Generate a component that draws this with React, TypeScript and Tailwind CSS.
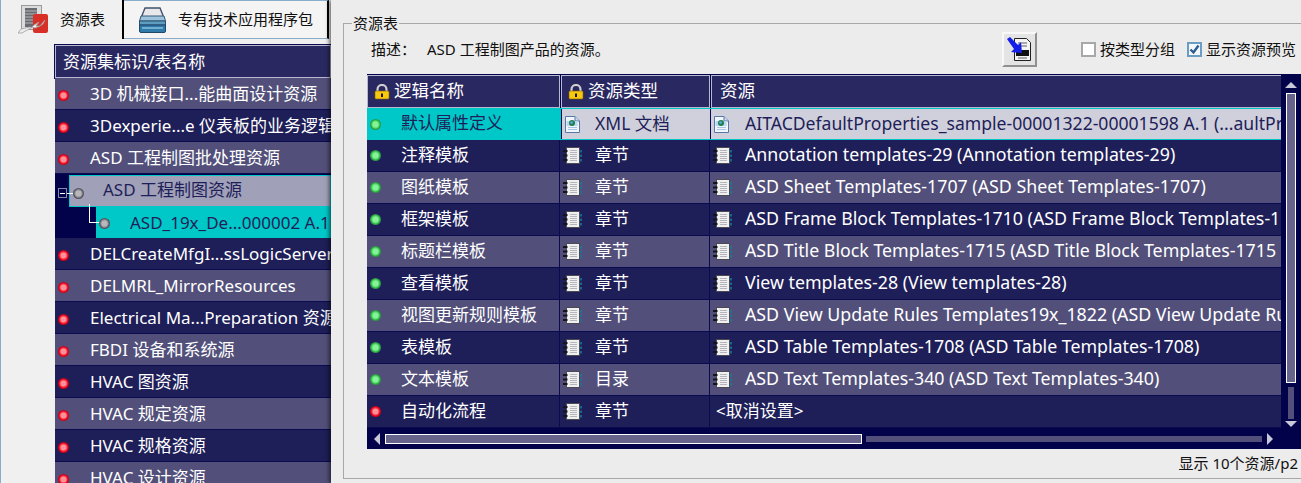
import type { ReactNode } from "react";

const FONT = "font-['Noto_Sans','Noto_Sans_CJK_SC',sans-serif]";

type Led = "red" | "green" | "gray";

const LED_COLORS: Record<Led, { rim: string; mid: string; core: string }> = {
  red: { rim: "#d00018", mid: "#ff3040", core: "#ff9098" },
  green: { rim: "#2f9a45", mid: "#48e060", core: "#88f098" },
  gray: { rim: "#555560", mid: "#909098", core: "#b8b8bc" },
};

function LedDot({ color }: { color: Led }) {
  const c = LED_COLORS[color];
  return (
    <svg width="11" height="11" viewBox="0 0 11 11" className="shrink-0">
      <circle cx="5.5" cy="5.5" r="5.5" fill={c.rim} />
      <circle cx="5.5" cy="5.5" r="4.2" fill={c.mid} />
      <circle cx="5.5" cy="5.5" r="3" fill={c.core} />
    </svg>
  );
}

function NotebookIcon() {
  return (
    <svg width="19" height="17" viewBox="0 0 19 17" className="shrink-0">
      <rect x="3.5" y=".5" width="13" height="16" fill="#f0f0f0" stroke="#4a4a54" />
      <path d="M7 3.5h7M7 5.5h7M7 7.5h7M7 9.5h7M7 11.5h7M7 13.5h7" stroke="#b4b4ba" />
      <path d="M0 4h4.5M0 8.5h4.5M0 13h4.5" stroke="#14141c" strokeWidth="2" />
      <path d="M18 3v2.5M18 7.5v2.5M18 12v2.5" stroke="#0f7f9a" strokeWidth="1.5" />
    </svg>
  );
}

function XmlIcon() {
  return (
    <svg width="15" height="17" viewBox="0 0 15 17" className="shrink-0">
      <path d="M.5.5H10L14.5 5v11.5H.5z" fill="#f0f6fc" stroke="#5878a8" />
      <path d="M10 .5V5h4.5" fill="#c8d8ec" stroke="#5878a8" />
      <path d="M1.5 5h11v5h-11z" fill="#bcd6f0" />
      <circle cx="7" cy="7" r="3" fill="#1f7f48" />
      <circle cx="6.6" cy="6.6" r="1.4" fill="#58a8ec" />
      <path d="M3 11.5h9M3 13.5h9" stroke="#a8c4e4" />
    </svg>
  );
}

function LockIcon() {
  return (
    <svg width="16" height="16" viewBox="0 0 16 16" className="shrink-0">
      <path d="M3.5 8V5.5a4.5 4.5 0 0 1 9 0V8" fill="none" stroke="#d0d0d0" strokeWidth="2.2" />
      <rect x="1" y="7" width="14" height="8" rx="1" fill="#f8c810" stroke="#806000" strokeWidth=".6" />
      <path d="M7 9.5h2V13H7z" fill="#201808" />
    </svg>
  );
}

function ResourceTabIcon() {
  return (
    <svg width="30" height="30" viewBox="0 0 30 30" className="shrink-0">
      <rect x="3.5" y=".5" width="20" height="24" fill="#dcdcdc" stroke="#9a9a9a" />
      <rect x="7" y="3" width="12" height="19" fill="#6a6a72" />
      <path d="M7 6h12M7 9h12M7 12h12M7 15h12M7 18h12" stroke="#b4b4ba" />
      <rect x="15" y="9" width="15" height="19" rx="2" fill="#d83028" />
      <path d="M0 28l3-4 9-2 5 1 5-2 5-6-2 4-3 2-4 0 3-4-5 3-3 3-9 5z" fill="#ececec" stroke="#a0a0a0" strokeWidth=".8" />
    </svg>
  );
}

function PackageTabIcon() {
  return (
    <svg width="27" height="26" viewBox="0 0 27 26" className="shrink-0">
      <path d="M6 1h15l4 10H2z" fill="#e8e8ec" stroke="#40506a" strokeWidth="1.4" />
      <path d="M2 9h23l1.5 5H.5z" fill="#9cc4dc" stroke="#3a5a78" />
      <path d="M.5 14h26v4H.5z" fill="#5e9cc0" stroke="#2a5070" />
      <path d="M.5 18h26v6a1.5 1.5 0 0 1-1.5 1.5H2A1.5 1.5 0 0 1 .5 24z" fill="#2f7aa8" stroke="#20486a" />
      <path d="M3 21h21" stroke="#8cc4e0" strokeWidth="1.4" />
    </svg>
  );
}

function ExportIcon() {
  return (
    <svg width="25" height="24" viewBox="0 0 25 24">
      <path d="M7.5 1.5h12l4 4v18h-16z" fill="#f4f4f4" stroke="#202020" />
      <path d="M11 6h9M11 9h9M11 21h9" stroke="#606060" />
      <rect x="9" y="13" width="13" height="6" fill="#101010" />
      <path d="M0 2l3-2 8 8 3-3 1 11-11-1 3-3z" fill="#1420e8" />
    </svg>
  );
}

function Checkbox({ checked }: { checked?: boolean }) {
  return (
    <span
      className={`flex h-[15px] w-[15px] shrink-0 items-center justify-center border-2 ${
        checked ? "border-[#6a9cc4] bg-[#f4f8fc]" : "border-[#a8a8a8] bg-white"
      }`}
    >
      {checked && (
        <svg width="11" height="11" viewBox="0 0 11 11">
          <path d="M1.5 5.5l3 3 5-7" fill="none" stroke="#2c5c90" strokeWidth="2.4" />
        </svg>
      )}
    </span>
  );
}

const TREE_ROWS_TOP = ["3D 机械接口...能曲面设计资源", "3Dexperie...e 仪表板的业务逻辑", "ASD 工程制图批处理资源"];
const TREE_ROWS_BOTTOM = [
  "DELCreateMfgI...ssLogicServer",
  "DELMRL_MirrorResources",
  "Electrical Ma...Preparation 资源",
  "FBDI 设备和系统源",
  "HVAC 图资源",
  "HVAC 规定资源",
  "HVAC 规格资源",
  "HVAC 设计资源",
];

function TreeRow({ label, light }: { label: string; light: boolean }) {
  return (
    <div
      className={`flex h-[32px] shrink-0 items-center overflow-hidden border-b border-[#0a0a50] pl-[3px] ${
        light ? "bg-[#52507a]" : "bg-[#1e1e58]"
      }`}
    >
      <span className="mt-[4px] flex">
        <LedDot color="red" />
      </span>
      <span className="ml-[21px] text-[17px] whitespace-nowrap text-white">{label}</span>
    </div>
  );
}

type Row = { name: string; led: Led; type: string; resource: ReactNode; unset?: boolean };

const ROWS: Row[] = [
  { name: "注释模板", led: "green", type: "章节", resource: "Annotation templates-29 (Annotation templates-29)" },
  { name: "图纸模板", led: "green", type: "章节", resource: "ASD Sheet Templates-1707 (ASD Sheet Templates-1707)" },
  { name: "框架模板", led: "green", type: "章节", resource: "ASD Frame Block Templates-1710 (ASD Frame Block Templates-1" },
  { name: "标题栏模板", led: "green", type: "章节", resource: "ASD Title Block Templates-1715 (ASD Title Block Templates-1715" },
  { name: "查看模板", led: "green", type: "章节", resource: "View templates-28 (View templates-28)" },
  { name: "视图更新规则模板", led: "green", type: "章节", resource: "ASD View Update Rules Templates19x_1822 (ASD View Update Ru" },
  { name: "表模板", led: "green", type: "章节", resource: "ASD Table Templates-1708 (ASD Table Templates-1708)" },
  { name: "文本模板", led: "green", type: "目录", resource: "ASD Text Templates-340 (ASD Text Templates-340)" },
  { name: "自动化流程", led: "red", type: "章节", resource: "<取消设置>", unset: true },
];

function HeaderCell({ width, label }: { width: string; label: string }) {
  return (
    <div className={`flex h-[33px] shrink-0 items-center border border-[#b8b8d0] bg-[#2a2860] pl-[6px] text-[17.5px] text-white ${width}`}>
      <LockIcon />
      <span className="mb-[2px] ml-[4px]">{label}</span>
    </div>
  );
}

export default function App() {
  return (
    <div className={`flex h-[483px] w-full overflow-hidden bg-[#f0f0f0] ${FONT}`}>
      <div className="flex w-[331px] shrink-0 flex-col">
        <div className="flex h-[39px] shrink-0 text-[#101010]">
          <div className="flex w-[124px] items-center border-r-2 border-l border-black border-l-[#8aaccc] bg-[#f0f0f0] pl-[17px]">
            <ResourceTabIcon />
            <span className="ml-[12px] text-[15px]">资源表</span>
          </div>
          <div className="flex w-[205px] items-center border-y border-r-2 border-[#8aaccc] border-r-black bg-[#f4f4f4] pl-[15px]">
            <PackageTabIcon />
            <span className="ml-[12px] text-[15px]">专有技术应用程序包</span>
          </div>
        </div>
        <div className="flex min-h-0 flex-1 flex-col overflow-hidden border-l border-[#8aaccc] pt-[6px] pl-[54px]">
          <div className="flex h-[33px] shrink-0 items-center border border-[#b8b8d0] bg-[#2a2860] pl-[7px] text-[17px] text-white outline outline-1 outline-[#0a0a50]">
            资源集标识/表名称
          </div>
          {TREE_ROWS_TOP.map((label, i) => (
            <TreeRow key={label} label={label} light={i % 2 === 0} />
          ))}
          <div className="flex h-[64px] shrink-0 flex-col bg-[#02024a]">
            <div className="mt-[1px] flex h-[32px] items-center">
              <span className="flex h-[10px] w-[9px] shrink-0 translate-x-[3px] translate-y-[2px] items-center justify-center border border-[#8888a8]">
                <span className="h-px w-[5px] bg-white" />
              </span>
              <span className="relative z-10 ml-[3px] h-px w-[6px] shrink-0 translate-y-[2px] bg-white" />
              <span className="relative z-10 flex translate-y-[2px]">
                <LedDot color="gray" />
              </span>
              <div className="-ml-[15px] flex h-full flex-1 items-center border border-[#00c8c8] bg-[#a0a0b8] pl-[33px] text-[17px] whitespace-nowrap text-[#1e1e58]">
                <span className="mb-[2px]">ASD 工程制图资源</span>
              </div>
            </div>
            <div className="flex h-[31px] items-center overflow-visible">
              <span className="relative z-10 mb-[18px] ml-[34px] h-[19px] w-[11px] shrink-0 border-b border-l border-white" />
              <span className="relative z-10 -ml-px flex translate-y-[1px]">
                <LedDot color="gray" />
              </span>
              <div className="-ml-[14px] flex h-full min-w-0 flex-1 items-center overflow-hidden bg-[#00c8c8] pl-[34px] text-[17px] whitespace-nowrap text-[#1e1e58]">
                ASD_19x_De...000002 A.1
              </div>
            </div>
          </div>
          {TREE_ROWS_BOTTOM.map((label, i) => (
            <TreeRow key={label} label={label} light={i % 2 === 1} />
          ))}
        </div>
      </div>

      <div className="relative z-10 flex min-w-0 flex-1 flex-col bg-[#ececec] pt-[23px] pb-[4px] pl-[12px] shadow-[-2px_0_4px_rgba(0,0,0,0.55)]">
        <div className="relative flex min-h-0 flex-1 flex-col border-t border-b border-l border-[#a8a8a8] pl-[23px]">
          <span className="absolute -top-[11px] left-[8px] bg-[#ececec] px-[1px] text-[15px] leading-[21px] text-[#101010]">资源表</span>
          <div className="flex h-[50px] shrink-0 items-center text-[15px] text-[#101010]">
            <span className="ml-[4px] w-[56px]">描述：</span>
            <span>ASD 工程制图产品的资源。</span>
            <button className="ml-auto flex h-[35px] w-[35px] shrink-0 items-center justify-center border-2 border-t-[#f8f8f8] border-r-[#909090] border-b-[#909090] border-l-[#f8f8f8] bg-[#e4e4e4]">
              <ExportIcon />
            </button>
            <label className="ml-[44px] flex items-center">
              <Checkbox />
              <span className="ml-[4px]">按类型分组</span>
            </label>
            <label className="ml-[12px] flex items-center">
              <Checkbox checked />
              <span className="mr-[5px] ml-[4px]">显示资源预览</span>
            </label>
          </div>

          <div className="flex h-[375px] shrink-0 bg-[#02024a] pt-px">
            <div className="flex min-w-0 flex-1 flex-col">
              <div className="flex h-[33px] shrink-0 gap-px">
                <HeaderCell width="w-[193px]" label="逻辑名称" />
                <HeaderCell width="w-[149px]" label="资源类型" />
                <div className="flex h-[33px] flex-1 items-center border border-r-0 border-[#b8b8d0] bg-[#2a2860] pl-[8px] text-[17.5px] text-white">
                  <span className="mb-[2px]">资源</span>
                </div>
              </div>
              <div className="flex h-[32px] shrink-0 border-t border-b border-[#00c8c8] bg-[#00c8c8] text-[#1e1e58]">
                <div className="flex w-[193px] shrink-0 items-center pl-[3px]">
                  <LedDot color="green" />
                  <span className="mb-[2px] ml-[20px] text-[17px]">默认属性定义</span>
                </div>
                <div className="ml-px flex w-[149px] shrink-0 items-center border-l border-[#0a0a50] bg-[#d0d0dc] pl-[3px]">
                  <XmlIcon />
                  <span className="mb-[2px] ml-[15px] text-[17.5px]">XML 文档</span>
                </div>
                <div className="flex min-w-0 flex-1 items-center overflow-hidden border-l border-[#0a0a50] bg-[#d0d0dc] pl-[3px] whitespace-nowrap">
                  <XmlIcon />
                  <span className="mb-[2px] ml-[16px] text-[17.6px]">AITACDefaultProperties_sample-00001322-00001598 A.1 (...aultPr</span>
                </div>
              </div>
              {ROWS.map((r, i) => (
                <div
                  key={r.name}
                  className={`flex h-[32px] shrink-0 border-b border-[#0a0a50] text-[17px] text-white ${
                    i % 2 === 0 ? "bg-[#1e1e58]" : "bg-[#52507a]"
                  }`}
                >
                  <div className="flex w-[193px] shrink-0 items-center border-r border-[#0a0a50] pl-[3px]">
                    <LedDot color={r.led} />
                    <span className="mb-[2px] ml-[20px]">{r.name}</span>
                  </div>
                  <div className="flex w-[150px] shrink-0 items-center border-r border-[#0a0a50] pl-[3px]">
                    <NotebookIcon />
                    <span className="mb-[2px] ml-[13px]">{r.type}</span>
                  </div>
                  <div className="flex min-w-0 flex-1 items-center overflow-hidden pl-[3px] whitespace-nowrap">
                    {r.unset ? (
                      <span className="mb-[2px] ml-[3px]">{r.resource}</span>
                    ) : (
                      <>
                        <NotebookIcon />
                        <span className="mb-[2px] ml-[13px] text-[17.8px]">{r.resource}</span>
                      </>
                    )}
                  </div>
                </div>
              ))}
              <div className="flex h-[21px] shrink-0 items-center">
                <span className="ml-[7px] h-0 w-0 border-y-[6px] border-r-[6px] border-y-transparent border-r-[#c8c8d8]" />
                <span className="ml-[5px] h-[10px] w-[477px] border border-white bg-[#66648c]" />
                <span className="ml-[4px] h-[6px] flex-1 bg-[#52507a]" />
                <span className="mr-[8px] ml-[5px] h-0 w-0 border-y-[6px] border-l-[6px] border-y-transparent border-l-[#c8c8d8]" />
              </div>
            </div>
            <div className="flex w-[20px] shrink-0 flex-col items-center">
              <span className="mt-[7px] h-0 w-0 border-x-[6px] border-b-[6px] border-x-transparent border-b-[#c8c8d8]" />
              <span className="mt-[5px] h-[290px] w-[10px] border border-white bg-[#66648c]" />
              <span className="mt-[4px] h-[32px] w-[6px] bg-[#52507a]" />
              <span className="mt-[2px] h-0 w-0 border-x-[6px] border-t-[6px] border-x-transparent border-t-[#c8c8d8]" />
            </div>
          </div>

          <div className="flex flex-1 items-center justify-end pr-[3px] text-[15px] text-[#101010]">显示 10个资源/p2</div>
        </div>
      </div>
    </div>
  );
}
